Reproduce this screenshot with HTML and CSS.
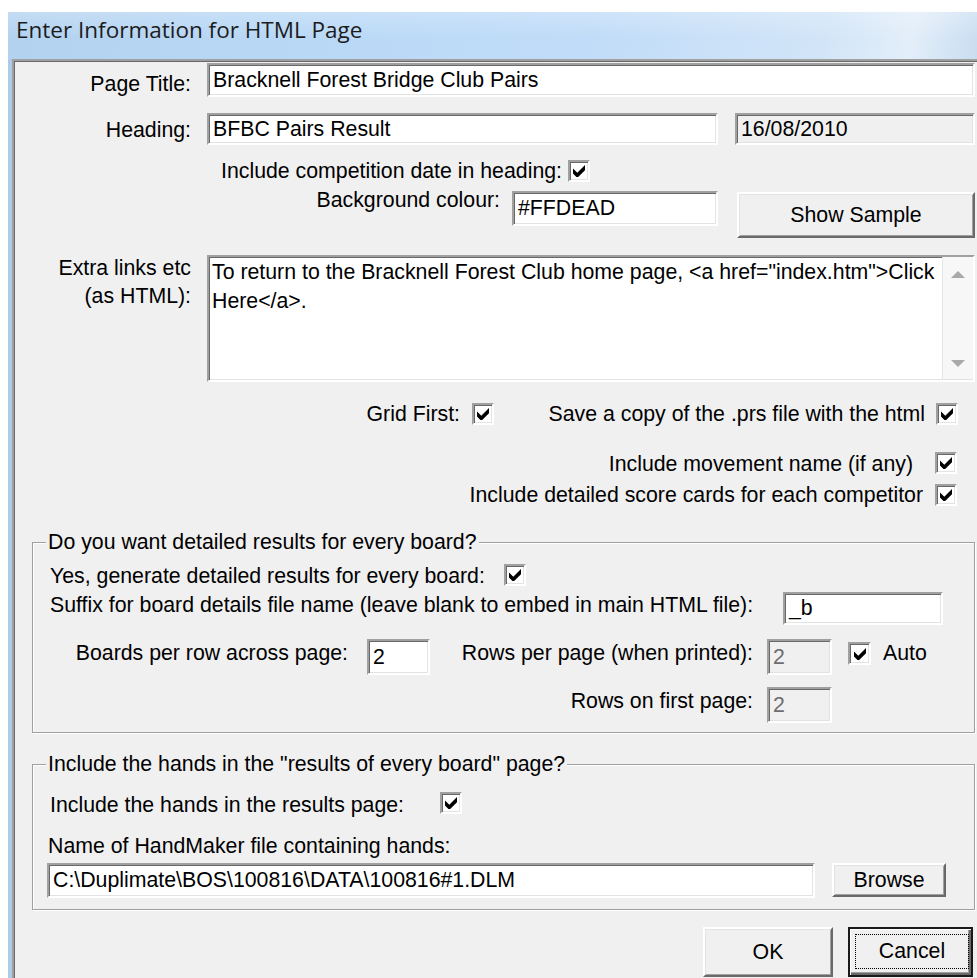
FILE: index.html
```html
<!DOCTYPE html>
<html>
<head>
<meta charset="utf-8">
<title>Enter Information for HTML Page</title>
<link rel="stylesheet" href="styles.css">
</head>
<body>
<div class="window">
  <div class="titlebar"><span class="title">Enter Information for HTML Page</span></div>
  <div class="frame">
    <div class="client">

      <div class="row r-title">
        <div class="lbl cap-main">Page Title:</div>
        <div class="edit edit-title">Bracknell Forest Bridge Club Pairs</div>
      </div>

      <div class="row r-heading">
        <div class="lbl cap-main">Heading:</div>
        <div class="edit edit-heading">BFBC Pairs Result</div>
        <div class="edit edit-date">16/08/2010</div>
      </div>

      <div class="row r-incdate">
        <div class="lbl cap-incdate">Include competition date in heading:</div>
        <span class="check"><svg viewBox="0 0 7 7" width="12" height="12"><polygon points="0,2 2.5,4.5 7,0 7,3 3,7 2,7 0,5"/></svg></span>
      </div>

      <div class="row r-colour">
        <div class="lbl cap-colour">Background colour:</div>
        <div class="edit edit-colour">#FFDEAD</div>
        <div class="btn btn-sample">Show Sample</div>
      </div>

      <div class="row r-extra">
        <div class="lbl cap-extra">Extra links etc<br>(as HTML):</div>
        <div class="edit memo">
          <div class="memo-text">To return to the Bracknell Forest Club home page, &lt;a href="index.htm"&gt;Click<br>Here&lt;/a&gt;.</div>
          <div class="vscroll"><span class="arrow-up"></span><span class="arrow-down"></span></div>
        </div>
      </div>

      <div class="row r-grid">
        <div class="lbl cap-grid">Grid First:</div>
        <span class="check"><svg viewBox="0 0 7 7" width="12" height="12"><polygon points="0,2 2.5,4.5 7,0 7,3 3,7 2,7 0,5"/></svg></span>
        <div class="lbl cap-prs">Save a copy of the .prs file with the html</div>
        <span class="check check-prs"><svg viewBox="0 0 7 7" width="12" height="12"><polygon points="0,2 2.5,4.5 7,0 7,3 3,7 2,7 0,5"/></svg></span>
      </div>

      <div class="row r-move">
        <div class="lbl cap-move">Include movement name (if any)</div>
        <span class="check"><svg viewBox="0 0 7 7" width="12" height="12"><polygon points="0,2 2.5,4.5 7,0 7,3 3,7 2,7 0,5"/></svg></span>
      </div>

      <div class="row r-cards">
        <div class="lbl cap-cards">Include detailed score cards for each competitor</div>
        <span class="check"><svg viewBox="0 0 7 7" width="12" height="12"><polygon points="0,2 2.5,4.5 7,0 7,3 3,7 2,7 0,5"/></svg></span>
      </div>

      <fieldset class="group group-boards">
        <legend>Do you want detailed results for every board?</legend>
        <div class="row r-yes">
          <div class="lbl cap-yes">Yes, generate detailed results for every board:</div>
          <span class="check"><svg viewBox="0 0 7 7" width="12" height="12"><polygon points="0,2 2.5,4.5 7,0 7,3 3,7 2,7 0,5"/></svg></span>
        </div>
        <div class="row r-suffix">
          <div class="lbl cap-suffix">Suffix for board details file name (leave blank to embed in main HTML file):</div>
          <div class="edit edit-suffix">_b</div>
        </div>
        <div class="row r-boards">
          <div class="lbl cap-boards">Boards per row across page:</div>
          <div class="edit edit-boards">2</div>
          <div class="lbl cap-rows">Rows per page (when printed):</div>
          <div class="edit edit-rows disabled">2</div>
          <span class="check check-auto"><svg viewBox="0 0 7 7" width="12" height="12"><polygon points="0,2 2.5,4.5 7,0 7,3 3,7 2,7 0,5"/></svg></span>
          <div class="lbl cap-auto">Auto</div>
        </div>
        <div class="row r-first">
          <div class="lbl cap-first">Rows on first page:</div>
          <div class="edit edit-rows disabled">2</div>
        </div>
      </fieldset>

      <fieldset class="group group-hands">
        <legend>Include the hands in the "results of every board" page?</legend>
        <div class="row r-hands">
          <div class="lbl cap-hands">Include the hands in the results page:</div>
          <span class="check"><svg viewBox="0 0 7 7" width="12" height="12"><polygon points="0,2 2.5,4.5 7,0 7,3 3,7 2,7 0,5"/></svg></span>
        </div>
        <div class="row r-name">
          <div class="lbl cap-name">Name of HandMaker file containing hands:</div>
        </div>
        <div class="row r-path">
          <div class="edit edit-path">C:\Duplimate\BOS\100816\DATA\100816#1.DLM</div>
          <div class="btn btn-browse">Browse</div>
        </div>
      </fieldset>

      <div class="row r-buttons">
        <div class="btn btn-ok">OK</div>
        <div class="btn btn-cancel"><span class="focus">Cancel</span></div>
      </div>

    </div>
  </div>
</div>
</body>
</html>
```

FILE: styles.css
```css
* { box-sizing: border-box; }

html, body {
  margin: 0;
  padding: 0;
  background: #ffffff;
}

body {
  width: 977px;
  height: 978px;
  overflow: hidden;
  font-family: "Liberation Sans", Arial, sans-serif;
  font-size: 21.3px;
  color: #000;
}

/* ---------- window chrome ---------- */
.window {
  margin: 12px 0 0 8px;
  width: 969px;
}

.titlebar {
  height: 47px;
  padding-left: 8px;
  background:
    linear-gradient(180deg, rgba(255,255,255,0.22), rgba(255,255,255,0) 55%),
    linear-gradient(100deg, #b3d2f0 0%, #bad9f7 35%, #c1dcf8 60%, #d2e5f8 84%, #e3eef9 93%, #c9ddf1 100%);
}

.title {
  display: block;
  font-family: "Open Sans", "Noto Sans", sans-serif;
  font-size: 22.5px;
  line-height: 36px;
  color: #1c1c1c;
  white-space: nowrap;
}

.frame {
  border-left: 4px solid #b0cbe8;
}

.client {
  height: 919px;
  background: #f0f0f0;
  border-top: 2px solid #a0a0a0;
  border-left: 2px solid #a0a0a0;
  box-shadow: inset 1px 1px 0 #696969;
  display: flex;
  flex-direction: column;
}

/* ---------- generic controls ---------- */
.row {
  display: flex;
  align-items: flex-start;
  flex: none;
}

.lbl {
  line-height: 24px;
  white-space: nowrap;
  flex: none;
}

.edit {
  flex: none;
  background: #fff;
  border: 2px solid;
  border-color: #a0a0a0 #ffffff #ffffff #a0a0a0;
  box-shadow: inset 1px 1px 0 #696969, inset -1px -1px 0 #e3e3e3;
  padding-left: 4px;
  white-space: nowrap;
  overflow: hidden;
}

.edit.disabled,
.edit-date {
  background: #f0f0f0;
}

.edit.disabled {
  color: #6d6d6d;
}

.check {
  flex: none;
  width: 22px;
  height: 22px;
  background: #fff;
  border: 2px solid;
  border-color: #a0a0a0 #ffffff #ffffff #a0a0a0;
  box-shadow: inset 1px 1px 0 #696969, inset -1px -1px 0 #e3e3e3;
  display: flex;
  align-items: center;
  justify-content: center;
}

.check svg { display: block; fill: #000; }

.btn {
  flex: none;
  display: flex;
  align-items: center;
  justify-content: center;
  background: #f0f0f0;
  border: 2px solid;
  border-color: #ffffff #696969 #696969 #ffffff;
  box-shadow: inset 1px 1px 0 #e3e3e3, inset -1px -1px 0 #a0a0a0;
  white-space: nowrap;
}

/* ---------- Page Title ---------- */
.r-title { margin-top: 2px; height: 34px; }
.cap-main { width: 177px; text-align: right; margin-top: 9px; }
.edit-title { margin-left: 16px; width: 768px; height: 34px; line-height: 30px; }

/* ---------- Heading ---------- */
.r-heading { margin-top: 16px; height: 32px; }
.r-heading .cap-main { margin-top: 5px; }
.edit-heading { margin-left: 16px; width: 511px; height: 32px; line-height: 28px; }
.edit-date { margin-left: 17px; width: 240px; height: 32px; line-height: 28px; }

/* ---------- date in heading ---------- */
.r-incdate { margin-top: 14px; height: 23px; }
.cap-incdate { width: 548px; text-align: right; }
.r-incdate .check { margin-left: 6px; margin-top: 1px; }

/* ---------- background colour ---------- */
.r-colour { margin-top: 5px; height: 51px; }
.cap-colour { width: 486px; text-align: right; margin-top: 1px; }
.edit-colour { margin-left: 12px; margin-top: 4px; width: 206px; height: 35px; line-height: 31px; }
.btn-sample { margin-left: 19px; margin-top: 5px; width: 238px; height: 46px; }

/* ---------- extra links ---------- */
.r-extra { margin-top: 16px; height: 128px; }
.cap-extra { width: 177px; text-align: right; line-height: 28px; }
.memo {
  margin-left: 16px;
  margin-top: 1px;
  width: 768px;
  height: 127px;
  padding: 1px 0 0 0;
  display: flex;
}
.memo-text {
  flex: 1;
  padding-left: 3px;
  line-height: 29px;
}
.vscroll {
  width: 31px;
  margin-top: -1px;
  margin-bottom: 1px;
  background: #f7f7f7;
  border-left: 1px solid #e6e6e6;
  display: flex;
  flex-direction: column;
  align-items: center;
  justify-content: space-between;
  padding: 14px 0 12px 0;
}
.arrow-up {
  width: 0;
  height: 0;
  border-left: 7px solid transparent;
  border-right: 7px solid transparent;
  border-bottom: 7px solid #a9a9a9;
}
.arrow-down {
  width: 0;
  height: 0;
  border-left: 7px solid transparent;
  border-right: 7px solid transparent;
  border-top: 7px solid #a9a9a9;
}

/* ---------- option checkboxes ---------- */
.r-grid { margin-top: 19px; height: 26px; }
.cap-grid { width: 446px; text-align: right; margin-top: 1px; }
.r-grid .check { margin-left: 12px; margin-top: 2px; }
.cap-prs { width: 431px; text-align: right; margin-top: 1px; }
.r-grid .check-prs { margin-left: 11px; }

.r-move { margin-top: 25px; height: 23px; }
.cap-move { width: 899px; text-align: right; }
.r-move .check { margin-left: 22px; margin-top: 0; }

.r-cards { margin-top: 8px; height: 24px; }
.cap-cards { width: 909px; text-align: right; }
.r-cards .check { margin-left: 12px; margin-top: 1px; }

/* ---------- group boxes ---------- */
.group {
  flex: none;
  margin: 0 0 0 18px;
  padding: 0;
  min-width: 0;
  width: 943px;
  border: 1px solid #a0a0a0;
  box-shadow: inset 1px 1px 0 #ffffff, 1px 1px 0 #ffffff;
}

.group legend {
  margin-left: 13px;
  padding: 0 2px;
  line-height: 24px;
  background: #f0f0f0;
  white-space: nowrap;
}

.group-boards { margin-top: 23px; padding-bottom: 9px; }
.group-hands { margin-top: 19px; padding-bottom: 11px; }

.r-yes { margin-top: 9px; height: 24px; }
.cap-yes { margin-left: 17px; width: 454px; margin-top: 1px; }
.r-yes .check { margin-top: 1px; }

.r-suffix { margin-top: 5px; height: 33px; }
.cap-suffix { margin-left: 17px; width: 733px; margin-top: 1px; }
.edit-suffix { width: 160px; height: 33px; line-height: 29px; }

.r-boards { margin-top: 14px; height: 36px; }
.cap-boards { width: 315px; text-align: right; margin-top: 2px; }
.edit-boards { margin-left: 19px; width: 63px; height: 36px; line-height: 32px; }
.cap-rows { width: 323px; text-align: right; margin-top: 2px; }
.edit-rows { margin-left: 14px; width: 65px; height: 36px; line-height: 32px; }
.r-boards .check-auto { margin-left: 16px; margin-top: 3px; width: 23px; height: 23px; }
.cap-auto { margin-left: 12px; margin-top: 2px; }

.r-first { margin-top: 12px; height: 36px; }
.cap-first { width: 720px; text-align: right; margin-top: 2px; }

.r-hands { margin-top: 16px; height: 23px; }
.cap-hands { margin-left: 17px; width: 390px; margin-top: 1px; }

.r-name { margin-top: 19px; height: 24px; }
.cap-name { margin-left: 15px; }

.r-path { margin-top: 5px; height: 35px; }
.edit-path { margin-left: 14px; width: 768px; height: 35px; line-height: 31px; }
.btn-browse { margin-left: 17px; width: 114px; height: 34px; }

/* ---------- dialog buttons ---------- */
.r-buttons {
  margin-top: 17px;
  height: 50px;
  justify-content: flex-end;
  gap: 15px;
  padding-right: 4px;
}
.btn-ok { width: 130px; height: 50px; }
.btn-cancel {
  width: 125px;
  height: 50px;
  border: 2px solid #1a1a1a;
  box-shadow: inset 1px 1px 0 #ffffff, inset -2px -2px 0 #696969, inset -3px -3px 0 #a0a0a0;
  padding: 5px 2px 6px 5px;
  align-items: stretch;
}
.focus {
  flex: 1;
  display: flex;
  align-items: center;
  justify-content: center;
  border: 1px dotted #000;
}
```
